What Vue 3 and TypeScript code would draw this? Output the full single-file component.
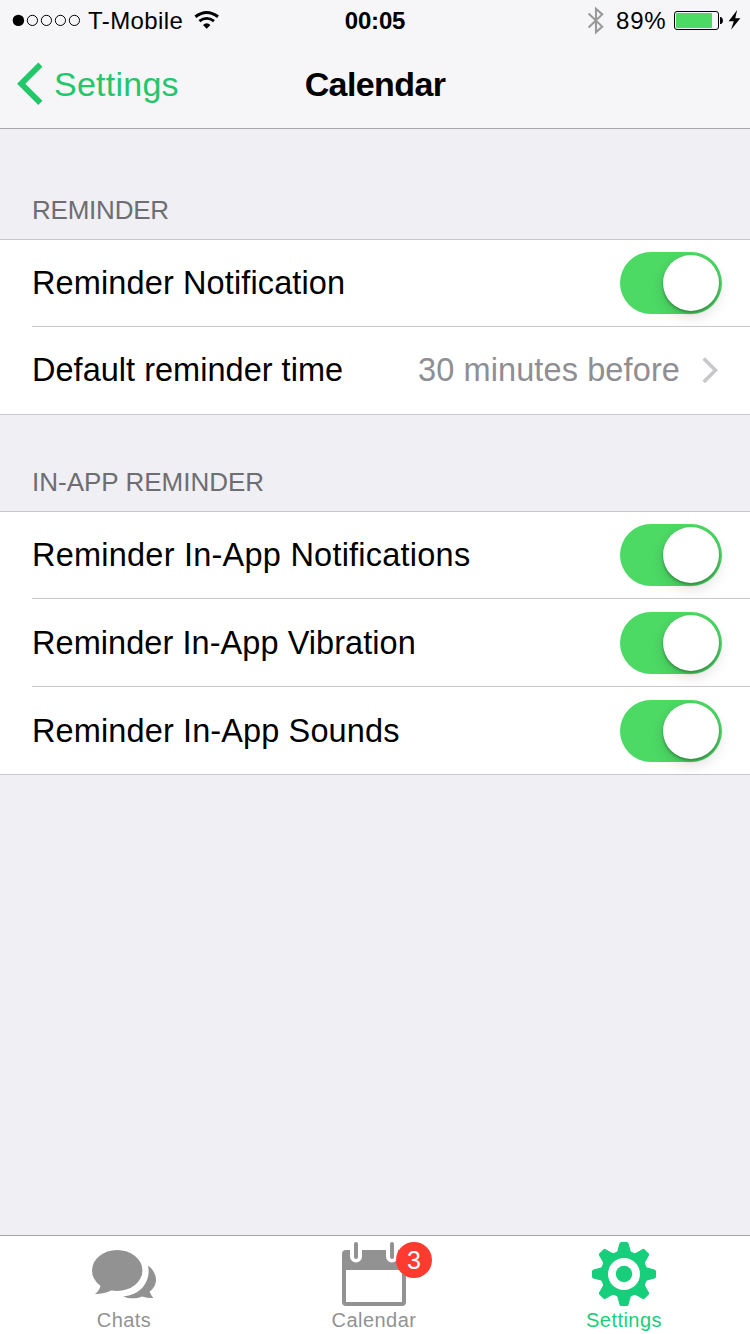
<script setup lang="ts">
import { ref } from 'vue'

interface Row {
  id: string
  label: string
  value?: string
  on?: boolean
}
interface Group {
  title: string
  rows: Row[]
}

const groups = ref<Group[]>([
  {
    title: 'REMINDER',
    rows: [
      { id: 'notification', label: 'Reminder Notification', on: true },
      { id: 'time', label: 'Default reminder time', value: '30 minutes before' },
    ],
  },
  {
    title: 'IN-APP REMINDER',
    rows: [
      { id: 'notifications', label: 'Reminder In-App Notifications', on: true },
      { id: 'vibration', label: 'Reminder In-App Vibration', on: true },
      { id: 'sounds', label: 'Reminder In-App Sounds', on: true },
    ],
  },
])

const teeth: number[] = [0, 45, 90, 135, 180, 225, 270, 315]
const signalDots: number[] = [32.4, 46.4, 60.4, 74.4]

function toggle(row: Row): void {
  row.on = !row.on
}
</script>

<template>
  <div class="screen">
    <header class="top">
      <div class="status">
        <div class="status-left">
          <svg width="88" height="40" viewBox="0 0 88 40">
            <circle cx="18.4" cy="20.4" r="5.7" fill="#000" />
            <circle v-for="x in signalDots" :key="x" :cx="x" cy="20.4" r="5.1" fill="none" stroke="#000" stroke-width="1" />
          </svg>
          <span class="carrier">T-Mobile</span>
          <svg width="28" height="40" viewBox="192 0 28 40">
            <path d="M195.4 16.7Q206.7 8.2 218 16.7" fill="none" stroke="#000" stroke-width="3" />
            <path d="M199.4 21.2Q206.7 15.6 214 21.2" fill="none" stroke="#000" stroke-width="2.8" />
            <path d="M203 25Q206.7 21.6 210.4 25L206.7 28.8Z" fill="#000" />
          </svg>
        </div>
        <span class="clock">00:05</span>
        <div class="status-right">
          <svg width="32" height="40" viewBox="584 0 32 40">
            <path d="M588.6 13.4L602.2 26.6L596 32.2V8.8L602.2 14.4L588.6 27.6" fill="none" stroke="#999" stroke-width="2.1" />
          </svg>
          <span class="percent">89%</span>
          <svg width="80" height="40" viewBox="670 0 80 40">
            <rect x="674.5" y="11.5" width="44" height="18" rx="2.5" fill="none" stroke="#000" />
            <rect x="676" y="13" width="36" height="15" rx="1" fill="#4cd964" />
            <path d="M720 17h1q2 1 2 3.5t-2 3.5h-1z" fill="#000" />
            <path d="M737.2 10L728.6 21.2H733.8L731 29.8L740.4 18.2H735.2Z" fill="#000" />
          </svg>
        </div>
      </div>
      <nav class="nav">
        <div class="back">
          <svg width="54" height="88" viewBox="0 40 54 88">
            <path d="M40.4 64.6L21.2 83.7L40.4 102.9" fill="none" stroke="#22c769" stroke-width="5.8" />
          </svg>
          <span>Settings</span>
        </div>
        <h1>Calendar</h1>
      </nav>
    </header>

    <main>
      <section v-for="group in groups" :key="group.title" class="group">
        <h2>{{ group.title }}</h2>
        <div class="rows">
          <div v-for="row in group.rows" :key="row.id" class="row" :class="row.id">
            <span class="label">{{ row.label }}</span>
            <template v-if="row.value">
              <span class="value">{{ row.value }}</span>
              <svg class="disclosure" width="18" height="28" viewBox="702 356 18 28">
                <path d="M703.7 358.4L715.5 370.2L703.7 382" fill="none" stroke="#c7c7cc" stroke-width="3.5" />
              </svg>
            </template>
            <button v-else class="switch" :class="{ on: row.on }" @click="toggle(row)">
              <span class="knob"></span>
            </button>
          </div>
        </div>
      </section>
    </main>

    <footer class="tabs">
      <div class="tab">
        <svg width="68" height="68" viewBox="90 1240 68 68" fill="#929292">
          <ellipse cx="117.2" cy="1270.4" rx="25.2" ry="20.5" />
          <path d="M99.2 1283L100.6 1285.4Q99.5 1290.5 95 1294Q105 1294 112 1290L117 1288V1280Z" />
          <path d="M148 1265.6C153.5 1269.5 156 1275 156 1279.8C156 1284.5 153.6 1288.8 149.6 1291.8Q151 1295.6 153.4 1298Q147 1298.2 142.2 1296.4C136.5 1298.8 129 1299 123.2 1296.4C131 1296 138.5 1292.4 143.2 1286.8C147.8 1281 149.8 1273.5 148 1265.6Z" />
        </svg>
        <span class="tab-label">Chats</span>
      </div>
      <div class="tab">
        <div class="icon-wrap">
          <svg width="68" height="68" viewBox="340 1240 68 68">
            <path fill="#929292" fill-rule="evenodd" d="M346 1250H402Q406 1250 406 1254V1302Q406 1306 402 1306H346Q342 1306 342 1302V1254Q342 1250 346 1250ZM346 1270V1302H402V1270Z" />
            <g stroke-linecap="round">
              <path d="M356 1246V1256.5M392 1246V1256.5" stroke="#fff" stroke-width="12" />
              <path d="M356 1244V1257M392 1244V1257" stroke="#929292" stroke-width="4" />
            </g>
          </svg>
          <span class="badge">3</span>
        </div>
        <span class="tab-label">Calendar</span>
      </div>
      <div class="tab active">
        <svg width="68" height="68" viewBox="-34 -34 68 68" fill="#17cf7b">
          <circle r="23.4" />
          <path
            v-for="angle in teeth"
            :key="angle"
            :transform="`rotate(${angle})`"
            d="M-9 -20L-6.6 -23L-4.6 -30.5Q-4.2 -32 -2.8 -32H2.8Q4.2 -32 4.6 -30.5L6.6 -23L9 -20Z"
          />
          <circle r="16" fill="#fff" />
          <circle r="8.2" />
        </svg>
        <span class="tab-label">Settings</span>
      </div>
    </footer>
  </div>
</template>

<style>
body {
  margin: 0;
}
</style>

<style scoped>
.screen {
  width: 750px;
  height: 1334px;
  display: flex;
  flex-direction: column;
  overflow: hidden;
  background: #efeff4;
  color: #000;
  font-family: "Liberation Sans", Arial, sans-serif;
}
svg {
  display: block;
  flex: none;
}
.top {
  height: 128px;
  background: #f6f6f8;
  border-bottom: 1px solid #a7a7ac;
}
.status {
  height: 40px;
  display: grid;
  grid-template-columns: 1fr auto 1fr;
  align-items: center;
  font-size: 24px;
  line-height: 38px;
}
.status span {
  padding-top: 2px;
}
.status-left,
.status-right {
  display: flex;
  align-items: center;
}
.status-right {
  justify-content: flex-end;
}
.carrier {
  width: 104px;
  letter-spacing: 0.4px;
}
.clock {
  font-weight: bold;
  letter-spacing: -0.2px;
}
.percent {
  width: 54px;
  letter-spacing: 0.8px;
}
.nav {
  height: 88px;
  display: grid;
  grid-template-columns: 1fr auto 1fr;
  align-items: center;
  font-size: 34px;
  line-height: 88px;
}
.back {
  display: flex;
  color: #22c769;
  letter-spacing: 0.25px;
}
h1 {
  margin: 0;
  font-size: 34px;
  font-weight: bold;
  letter-spacing: -0.6px;
}
main {
  flex: 1;
}
h2 {
  margin: 0;
  padding: 0 0 9px 32px;
  display: flex;
  align-items: flex-end;
  box-sizing: border-box;
  color: #6d6d72;
  font-size: 26px;
  font-weight: normal;
  line-height: 40px;
}
.group:first-child h2 {
  height: 110px;
  letter-spacing: -0.22px;
}
.group + .group h2 {
  height: 96px;
  letter-spacing: 0;
}
.rows {
  background: #fff;
  border-top: 1px solid #c8c7cc;
  border-bottom: 1px solid #c8c7cc;
}
.row {
  display: flex;
  align-items: center;
  height: 86px;
  margin-left: 32px;
  padding-right: 28px;
  font-size: 32.5px;
  line-height: 38px;
  letter-spacing: 0.12px;
}
.row + .row {
  padding-top: 1px;
  border-top: 1px solid #c8c7cc;
}
.row.time {
  padding-top: 0;
  padding-bottom: 1px;
  letter-spacing: 0.02px;
}
.row.notifications {
  letter-spacing: 0.23px;
}
.row.vibration {
  letter-spacing: 0.06px;
}
.label {
  flex: 1;
}
.value {
  color: #8e8e93;
  margin-right: 22px;
  letter-spacing: 0.11px;
}
.disclosure {
  margin-right: 2px;
}
.switch {
  width: 102px;
  height: 62px;
  padding: 3px;
  border: 0;
  border-radius: 31px;
  display: flex;
  background: #e5e5ea;
}
.switch.on {
  justify-content: flex-end;
  background: #4cd964;
}
.knob {
  width: 56px;
  height: 56px;
  border-radius: 50%;
  background: #fff;
  box-shadow: 0 6px 14px rgba(0, 0, 0, 0.13), 0 2px 3px rgba(0, 0, 0, 0.3);
}
.tabs {
  height: 98px;
  border-top: 1px solid #a7a7ac;
  background: #fff;
  display: grid;
  grid-template-columns: repeat(3, 250px);
}
.tab {
  display: flex;
  flex-direction: column;
  align-items: center;
  padding: 4px 2px 0 0;
  color: #929292;
}
.tab.active {
  color: #17cf7b;
}
.tab-label {
  font-size: 20px;
  line-height: 24px;
  letter-spacing: 0.45px;
}
.icon-wrap {
  position: relative;
}
.badge {
  position: absolute;
  left: 56px;
  top: 2px;
  width: 36px;
  height: 36px;
  border-radius: 50%;
  background: #ff3b30;
  color: #fff;
  font-size: 25px;
  line-height: 36px;
  text-align: center;
}
</style>
